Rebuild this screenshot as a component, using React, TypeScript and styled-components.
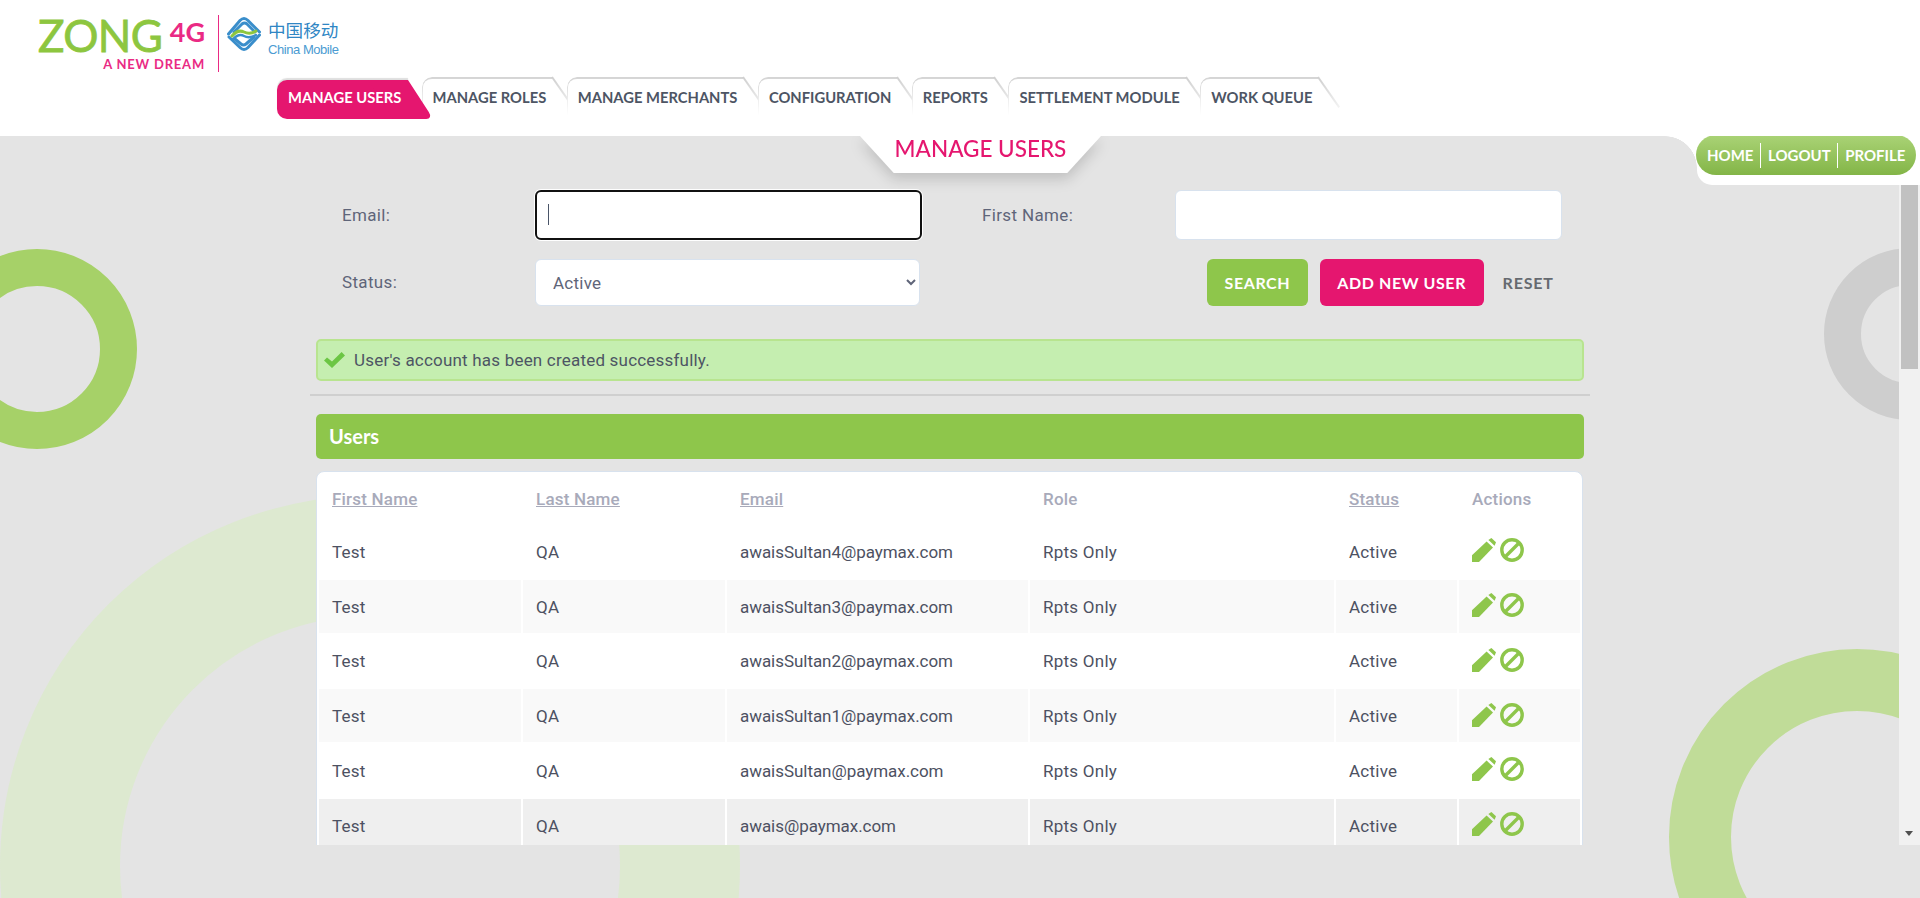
import styled, { createGlobalStyle } from "styled-components";

const heading = `"Lato", "Liberation Sans", sans-serif`;
const body = `"Roboto", "Liberation Sans", sans-serif`;
const green = "#8ec64b";
const pink = "#e5166f";
const gray = "#e4e4e4";

const GlobalStyle = createGlobalStyle`
  html, body {
    margin: 0;
    height: 100%;
    overflow: hidden;
    background: #fff;
    font-family: ${body};
  }
  * {
    box-sizing: border-box;
  }
`;

const Page = styled.div`
  width: 1920px;
  height: 898px;
  display: flex;
  flex-direction: column;
`;

const Header = styled.header`
  height: 136px;
  flex: none;
  background: #fff;
`;

const LogoRow = styled.div`
  height: 72px;
  padding: 15px 0 0 38px;
  display: flex;
`;

const ZongBlock = styled.div`
  width: 167px;
  display: flex;
  flex-direction: column;
  align-items: flex-end;
`;

const ZongLine = styled.div`
  width: 100%;
  height: 42px;
  display: flex;
  justify-content: space-between;
`;

const ZongWord = styled.span`
  font: 400 44px/40px ${heading};
  color: #8dc63f;
  letter-spacing: -0.6px;
  -webkit-text-stroke: 0.8px #8dc63f;
`;

const FourG = styled.span`
  font: 700 27px/30px ${heading};
  color: #ea2a84;
  margin-top: 2px;
`;

const Tagline = styled.span`
  margin-top: 2px;
  font: 700 13px/15px ${heading};
  letter-spacing: 0.8px;
  color: #ea2a84;
  white-space: nowrap;
`;

const LogoDivider = styled.div`
  width: 1px;
  height: 57px;
  margin: 0 7px 0 13px;
  background: #ea2a84;
`;

const MobileBlock = styled.div`
  display: flex;
  flex-direction: column;
  margin: 4px 0 0 6px;
`;

const MobileCn = styled.span`
  font: 400 17.6px/21px "Noto Sans CJK SC", sans-serif;
  color: #2f86c4;
`;

const MobileEn = styled.span`
  font: 400 13px/15px "Liberation Sans", sans-serif;
  letter-spacing: -0.45px;
  color: #4b9bd2;
  margin-top: 2px;
`;

const Nav = styled.nav`
  margin: 5px 0 0 277px;
  display: flex;
  align-items: flex-start;
`;

const Tab = styled.a<{ $active?: boolean }>`
  position: relative;
  height: ${(p) => (p.$active ? "39px" : "36px")};
  margin-top: ${(p) => (p.$active ? "3px" : "0")};
  margin-right: ${(p) => (p.$active ? "13.5px" : "-6.5px")};
  padding: ${(p) => (p.$active ? "0 0 4px 11px" : "4px 27px 0 11px")};
  width: ${(p) => (p.$active ? "131px" : "auto")};
  z-index: ${(p) => (p.$active ? 2 : 1)};
  display: flex;
  align-items: center;
  font: 700 14.75px/1 ${heading};
  white-space: nowrap;
  color: ${(p) => (p.$active ? "#fff" : "#4d5564")};
  background: ${(p) => (p.$active ? pink : "#fff")};
  border-radius: ${(p) => (p.$active ? "10px 0 0 10px" : "10px 0 0 0")};
  box-shadow: ${(p) => (p.$active ? "0 -2px 1px #dedede" : "none")};

  ${(p) =>
    p.$active
      ? `
  &::after {
    content: "";
    position: absolute;
    top: 0;
    left: 100%;
    margin-left: -40px;
    width: 40px;
    height: 39px;
    background: ${pink};
    transform: skewX(33deg);
    transform-origin: top left;
    border-radius: 0 0 7px 0;
    z-index: -1;
  }`
      : `
  &::before {
    content: "";
    position: absolute;
    top: 0;
    left: 0;
    right: 21px;
    height: 36px;
    border-top: 2px solid #d4d4d4;
    border-left: 1px solid #d4d4d4;
    border-radius: 10px 0 0 0;
    -webkit-mask-image: linear-gradient(#000, transparent);
    mask-image: linear-gradient(#000, transparent);
  }
  &::after {
    content: "";
    position: absolute;
    top: 0;
    right: 20px;
    width: 2px;
    height: 37px;
    background: linear-gradient(#cfcfcf, #f2f2f2);
    transform: rotate(-35deg);
    transform-origin: top center;
  }`}
`;

const Main = styled.main`
  position: relative;
  flex: 1;
  overflow: hidden;
  background: ${gray};
`;

const Ring = styled.div<{
  $x: number;
  $y: number;
  $outer: number;
  $inner: number;
  $color: string;
}>`
  position: absolute;
  left: ${(p) => p.$x - p.$outer}px;
  top: ${(p) => p.$y - 136 - p.$outer}px;
  width: ${(p) => p.$outer * 2}px;
  height: ${(p) => p.$outer * 2}px;
  border-radius: 50%;
  border: ${(p) => p.$outer - p.$inner}px solid ${(p) => p.$color};
`;

const CornerCurve = styled.div`
  position: absolute;
  top: 0;
  right: 223px;
  width: 32px;
  height: 32px;
  background: radial-gradient(circle at 0 100%, ${gray} 31.5px, #fff 32px);
`;

const CornerWhite = styled.div`
  position: absolute;
  top: 0;
  right: 0;
  width: 223px;
  height: 49px;
  background: #fff;
  border-bottom-left-radius: 15px;
`;

const QuickLinks = styled.div`
  position: absolute;
  top: -1px;
  left: 1696px;
  width: 220px;
  height: 40px;
  border-radius: 20px;
  background: linear-gradient(#aad376, #83b547);
  display: flex;
  align-items: center;
  padding-left: 11px;
`;

const QuickLink = styled.a<{ $divided?: boolean }>`
  font: 700 15px/25px ${heading};
  color: #fff;
  padding: 0 6.5px 0 ${(p) => (p.$divided ? "7px" : "0")};
  border-left: ${(p) => (p.$divided ? "1px solid #fff" : "none")};
  white-space: nowrap;
`;

const TitleRow = styled.div`
  position: relative;
  z-index: 1;
  height: 49px;
  padding-left: 860px;
  filter: drop-shadow(0 6px 7px rgba(0, 0, 0, 0.16));
`;

const Title = styled.h1`
  margin: 0;
  width: 241px;
  height: 37px;
  background: #fff;
  clip-path: polygon(0 0, 100% 0, 86% 100%, 14% 100%);
  text-align: center;
  font: 500 22.5px/25px ${heading};
  color: ${pink};
`;

const Scroller = styled.div`
  position: relative;
  height: 660px;
  overflow: hidden;
`;

const ScrollTrack = styled.div`
  position: absolute;
  top: 0;
  right: 0;
  bottom: 0;
  width: 21px;
  padding-left: 2px;
  background: #f1f1f1;
`;

const ScrollThumb = styled.div`
  width: 17px;
  height: 184px;
  background: #c1c1c1;
`;

const ScrollArrow = styled.div`
  position: absolute;
  left: 6px;
  bottom: 9px;
  width: 0;
  height: 0;
  border-left: 4.5px solid transparent;
  border-right: 4.5px solid transparent;
  border-top: 5px solid #505050;
`;

const Content = styled.div`
  width: 1280px;
  margin-left: 310px;
  padding-top: 5px;
`;

const SearchForm = styled.form`
  display: grid;
  grid-template-columns: 193px 387px 253px 387px;
  grid-template-rows: 50px 47px;
  row-gap: 19px;
  padding-left: 32px;
  align-items: center;
`;

const Label = styled.label<{ $offset?: boolean }>`
  font: 400 17px/1 ${body};
  letter-spacing: 0.35px;
  color: #5f6579;
  padding-left: ${(p) => (p.$offset ? "60px" : "0")};
`;

const FieldWrap = styled.div`
  position: relative;
  height: 100%;
`;

const TextInput = styled.input<{ $focused?: boolean }>`
  width: 100%;
  height: 100%;
  background: #fff;
  border-radius: 6px;
  outline: none;
  border: ${(p) => (p.$focused ? "2px solid #111" : "1px solid #d8e2ee")};
  box-shadow: ${(p) => (p.$focused ? "0 0 0 1px #fff" : "none")};
`;

const Caret = styled.span`
  position: absolute;
  left: 13px;
  top: 14px;
  width: 1px;
  height: 21px;
  background: #4a5568;
`;

const Select = styled.select`
  width: 385px;
  height: 47px;
  padding-left: 13px;
  background: #fff;
  border: 1px solid #d8e2ee;
  border-radius: 6px;
  outline: none;
  font: 400 17px/1 ${body};
  letter-spacing: 0.25px;
  color: #5f6579;
`;

const Actions = styled.div`
  grid-column: 4;
  padding-left: 32px;
  display: flex;
  align-items: center;
  gap: 12px;
  height: 47px;
`;

const Button = styled.button<{ $color: string }>`
  height: 47px;
  padding: 0 17.5px;
  border: none;
  border-radius: 6px;
  background: ${(p) => p.$color};
  color: #fff;
  font: 700 16px/1 ${heading};
  letter-spacing: 0.6px;
  white-space: nowrap;
`;

const ResetLink = styled.a`
  margin-left: 7px;
  font: 700 16px/1 ${heading};
  letter-spacing: 0.8px;
  color: #666a70;
`;

const Alert = styled.div`
  margin: 33px 6px 0;
  height: 42px;
  padding-left: 6px;
  display: flex;
  align-items: center;
  gap: 9px;
  background: #c5eeb0;
  border: 2px solid #b8e48f;
  border-radius: 5px;
  font: 400 17px/1 ${body};
  letter-spacing: 0.2px;
  color: #4d5564;
`;

const Rule = styled.hr`
  margin: 13px 0 0;
  border: none;
  border-top: 2px solid #cfcfcf;
`;

const PanelBar = styled.div`
  margin: 18px 6px 0;
  height: 45px;
  padding: 0 0 2px 13px;
  display: flex;
  align-items: center;
  border-radius: 5px;
  background: ${green};
  font: 700 20px/1 ${heading};
  color: #fff;
`;

const Card = styled.div`
  margin: 12px 7px 0 6px;
  background: #fff;
  border: 1px solid #d8e2ee;
  border-radius: 8px 8px 0 0;
`;

const Table = styled.table`
  width: 100%;
  table-layout: fixed;
  border-collapse: separate;
  border-spacing: 2px;
`;

const HeadCell = styled.th<{ $sortable?: boolean }>`
  height: 49px;
  padding: 2px 0 0 13px;
  text-align: left;
  font: 500 17px/1 ${body};
  letter-spacing: 0.2px;
  color: #a8aaba;
  text-decoration: ${(p) => (p.$sortable ? "underline" : "none")};
`;

const Row = styled.tr<{ $shade?: string }>`
  background: ${(p) => p.$shade || "#fff"};
`;

const Cell = styled.td<{ $tight?: boolean }>`
  height: 52.75px;
  padding: 2px 0 0 13px;
  font: 400 17px/1 ${body};
  letter-spacing: ${(p) => (p.$tight ? "-0.05px" : "0.25px")};
  color: #4d5162;
`;

const IconRow = styled.div`
  display: flex;
  gap: 4px;
  margin-top: -4px;
`;

const IconSvg = styled.svg`
  width: 24px;
  height: 24px;
  display: block;
  color: ${green};
`;

const PencilIcon = () => (
  <IconSvg viewBox="0 0 24 24">
    <path fill="currentColor" d="M0 24V17.2L14.6 3.6 21 9.6 7 24Z" />
    <path fill="currentColor" d="M16.4 1.9 19.4 0 24 4.3 22.6 7.8Z" />
  </IconSvg>
);

const BanIcon = () => (
  <IconSvg viewBox="0 0 24 24">
    <circle cx="12" cy="12" r="10.2" fill="none" stroke="currentColor" strokeWidth="3.4" />
    <path d="M5 19 19 5" stroke="currentColor" strokeWidth="3.4" />
  </IconSvg>
);

const CheckIcon = () => (
  <svg width="21" height="16" viewBox="0 0 21 16">
    <path fill="#6cc644" d="M0 8.4 3 5.4 8 9.6 17.6 0 21 3.4 8 16Z" />
  </svg>
);

const MobileLogo = () => (
  <svg width="36" height="38" viewBox="0 0 36 38" fill="none" strokeLinecap="round">
    <path stroke="#3a8ecb" strokeWidth="3" d="M2.5 19 14 5.5Q18 1.5 22 5.5L33.5 17" />
    <path stroke="#3a8ecb" strokeWidth="3" d="M8 17 16 9Q18.5 7 21 9L29 17" />
    <path stroke="#3a8ecb" strokeWidth="3" d="M33.5 20 22 32.5Q18 36.5 14 32.5L3 22" />
    <path stroke="#3a8ecb" strokeWidth="3" d="M28 22 20 29Q17.5 31 15 29L9 24" />
    <path stroke="#8dc63f" strokeWidth="3" d="M6 21Q12 14 18 17T30 16" />
    <path stroke="#3a8ecb" strokeWidth="2.4" d="M7 24Q13 18 18 21T30 20" />
  </svg>
);

const tabs = [
  "MANAGE USERS",
  "MANAGE ROLES",
  "MANAGE MERCHANTS",
  "CONFIGURATION",
  "REPORTS",
  "SETTLEMENT MODULE",
  "WORK QUEUE",
];

const columns = [
  { label: "First Name", width: 202, sortable: true },
  { label: "Last Name", width: 202, sortable: true },
  { label: "Email", width: 301, sortable: true },
  { label: "Role", width: 304, sortable: false },
  { label: "Status", width: 121, sortable: true },
  { label: "Actions", width: 121, sortable: false },
];

const users = [
  { email: "awaisSultan4@paymax.com", shade: "#fff" },
  { email: "awaisSultan3@paymax.com", shade: "#f9f9f9" },
  { email: "awaisSultan2@paymax.com", shade: "#fff" },
  { email: "awaisSultan1@paymax.com", shade: "#f9f9f9" },
  { email: "awaisSultan@paymax.com", shade: "#fff" },
  { email: "awais@paymax.com", shade: "#efefef" },
];

export default function App() {
  return (
    <Page>
      <GlobalStyle />
      <Header>
        <LogoRow>
          <ZongBlock>
            <ZongLine>
              <ZongWord>ZONG</ZongWord>
              <FourG>4G</FourG>
            </ZongLine>
            <Tagline>A NEW DREAM</Tagline>
          </ZongBlock>
          <LogoDivider />
          <MobileLogo />
          <MobileBlock>
            <MobileCn>中国移动</MobileCn>
            <MobileEn>China Mobile</MobileEn>
          </MobileBlock>
        </LogoRow>
        <Nav>
          {tabs.map((tab, i) => (
            <Tab key={tab} $active={i === 0}>
              {tab}
            </Tab>
          ))}
        </Nav>
      </Header>

      <Main>
        <Ring $x={37} $y={349} $outer={100} $inner={63} $color="#a6d168" />
        <Ring $x={1910} $y={334} $outer={86} $inner={49} $color="#cecece" />
        <Ring $x={370} $y={866} $outer={370} $inner={250} $color="#dde9d0" />
        <Ring $x={1857} $y={837} $outer={188} $inner={126} $color="#c0dc98" />
        <CornerCurve />
        <CornerWhite />
        <QuickLinks>
          <QuickLink>HOME</QuickLink>
          <QuickLink $divided>LOGOUT</QuickLink>
          <QuickLink $divided>PROFILE</QuickLink>
        </QuickLinks>

        <TitleRow>
          <Title>MANAGE USERS</Title>
        </TitleRow>

        <Scroller>
          <Content>
            <SearchForm>
              <Label>Email:</Label>
              <FieldWrap>
                <TextInput $focused />
                <Caret />
              </FieldWrap>
              <Label $offset>First Name:</Label>
              <FieldWrap>
                <TextInput />
              </FieldWrap>
              <Label>Status:</Label>
              <Select defaultValue="Active">
                <option>Active</option>
                <option>Inactive</option>
              </Select>
              <Actions>
                <Button type="button" $color={green}>
                  SEARCH
                </Button>
                <Button type="button" $color={pink}>
                  ADD NEW USER
                </Button>
                <ResetLink>RESET</ResetLink>
              </Actions>
            </SearchForm>

            <Alert>
              <CheckIcon />
              User's account has been created successfully.
            </Alert>
            <Rule />

            <PanelBar>Users</PanelBar>
            <Card>
              <Table>
                <colgroup>
                  {columns.map((col) => (
                    <col key={col.label} width={col.width} />
                  ))}
                </colgroup>
                <thead>
                  <tr>
                    {columns.map((col) => (
                      <HeadCell key={col.label} $sortable={col.sortable}>
                        {col.label}
                      </HeadCell>
                    ))}
                  </tr>
                </thead>
                <tbody>
                  {users.map((user) => (
                    <Row key={user.email} $shade={user.shade}>
                      <Cell>Test</Cell>
                      <Cell>QA</Cell>
                      <Cell $tight>{user.email}</Cell>
                      <Cell>Rpts Only</Cell>
                      <Cell>Active</Cell>
                      <Cell>
                        <IconRow>
                          <PencilIcon />
                          <BanIcon />
                        </IconRow>
                      </Cell>
                    </Row>
                  ))}
                </tbody>
              </Table>
            </Card>
          </Content>
          <ScrollTrack>
            <ScrollThumb />
            <ScrollArrow />
          </ScrollTrack>
        </Scroller>
      </Main>
    </Page>
  );
}
